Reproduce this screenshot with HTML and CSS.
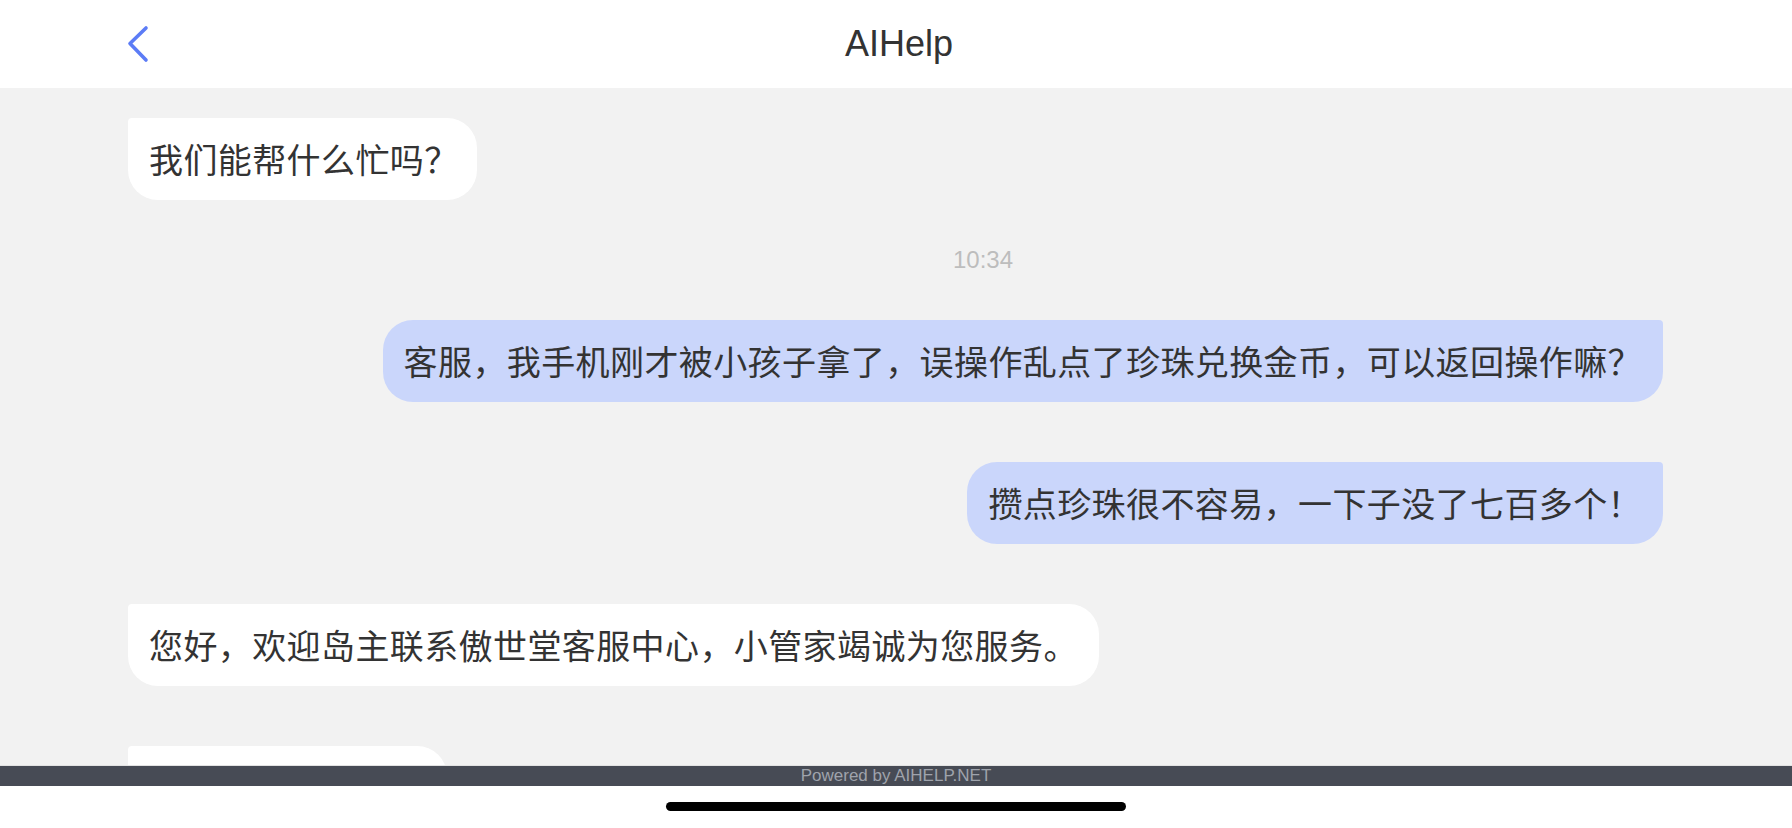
FILE: index.html
```html
<!DOCTYPE html>
<html lang="zh">
<head>
<meta charset="utf-8">
<title>AIHelp</title>
<link rel="stylesheet" href="styles.css">
</head>
<body>
<div class="app">
  <header class="topbar">
    <div class="back">
      <svg class="back-icon" width="24" height="40" viewBox="0 0 24 40">
        <path d="M20 4 L4 19.5 L20 36" fill="none" stroke="#5c7cf6" stroke-width="3.6" stroke-linecap="round" stroke-linejoin="round"/>
      </svg>
    </div>
    <div class="title">AIHelp</div>
    <div class="spacer"></div>
  </header>
  <main class="chat">
    <div class="row agent"><div class="bubble bubble-short">我们能帮什么忙吗？</div></div>
    <div class="time">10:34</div>
    <div class="row user"><div class="bubble">客服，我手机刚才被小孩子拿了，误操作乱点了珍珠兑换金币，可以返回操作嘛？</div></div>
    <div class="row user"><div class="bubble">攒点珍珠很不容易，一下子没了七百多个！</div></div>
    <div class="row agent"><div class="bubble">您好，欢迎岛主联系傲世堂客服中心，小管家竭诚为您服务。</div></div>
    <div class="row agent"><div class="bubble bubble-partial"></div></div>
  </main>
  <div class="powered">Powered by AIHELP.NET</div>
  <div class="home"><div class="home-indicator"></div></div>
</div>
</body>
</html>
```
FILE: styles.css
```css
* { box-sizing: border-box; }
html, body { margin: 0; padding: 0; }
body {
  width: 1792px;
  height: 828px;
  overflow: hidden;
  background: #ffffff;
  font-family: "Liberation Sans", "Noto Sans CJK SC", sans-serif;
  color: #333333;
}
.app {
  display: flex;
  flex-direction: column;
  height: 828px;
}
.topbar {
  height: 88px;
  flex: none;
  background: #ffffff;
  display: grid;
  grid-template-columns: 1fr auto 1fr;
  align-items: center;
}
.back {
  padding-left: 126px;
  display: flex;
  align-items: center;
}
.back-icon { display: block; }
.title {
  font-family: "Liberation Sans", sans-serif;
  font-size: 36px;
  color: #333333;
  line-height: 40px;
  padding-left: 6px;
}
.chat {
  flex: 1;
  min-height: 0;
  overflow: hidden;
  background: #f2f2f2;
  display: flex;
  flex-direction: column;
  gap: 60px;
  padding: 30px 129px 0 128px;
}
.row { display: flex; flex: none; }
.row.user { justify-content: flex-end; }
.bubble {
  height: 82px;
  line-height: 82px;
  padding: 0 21px;
  font-family: "Noto Sans CJK SC", sans-serif;
  font-size: 34px;
  letter-spacing: 0.4px;
  color: #333333;
  white-space: nowrap;
}
.agent .bubble {
  background: #ffffff;
  border-radius: 4px 30px 30px 30px;
}
.user .bubble {
  background: #cad6fb;
  border-radius: 30px 4px 30px 30px;
}
.bubble-short { padding-right: 18px; }
.bubble-partial { width: 319px; }
.time {
  flex: none;
  height: 30px;
  margin: -15px 0;
  padding-left: 175px;
  line-height: 30px;
  text-align: center;
  font-family: "Liberation Sans", sans-serif;
  font-size: 24px;
  color: #bdbdbd;
}
.powered {
  flex: none;
  height: 21px;
  border-top: 1px solid #e3e3e3;
  background: #474b55;
  color: #9fa3ac;
  font-family: "Liberation Sans", sans-serif;
  font-size: 17px;
  line-height: 20px;
  text-align: center;
}
.home {
  flex: none;
  height: 42px;
  background: #ffffff;
  display: flex;
  justify-content: center;
  padding-top: 16px;
}
.home-indicator {
  width: 460px;
  height: 9px;
  border-radius: 5px;
  background: #000000;
}
```
